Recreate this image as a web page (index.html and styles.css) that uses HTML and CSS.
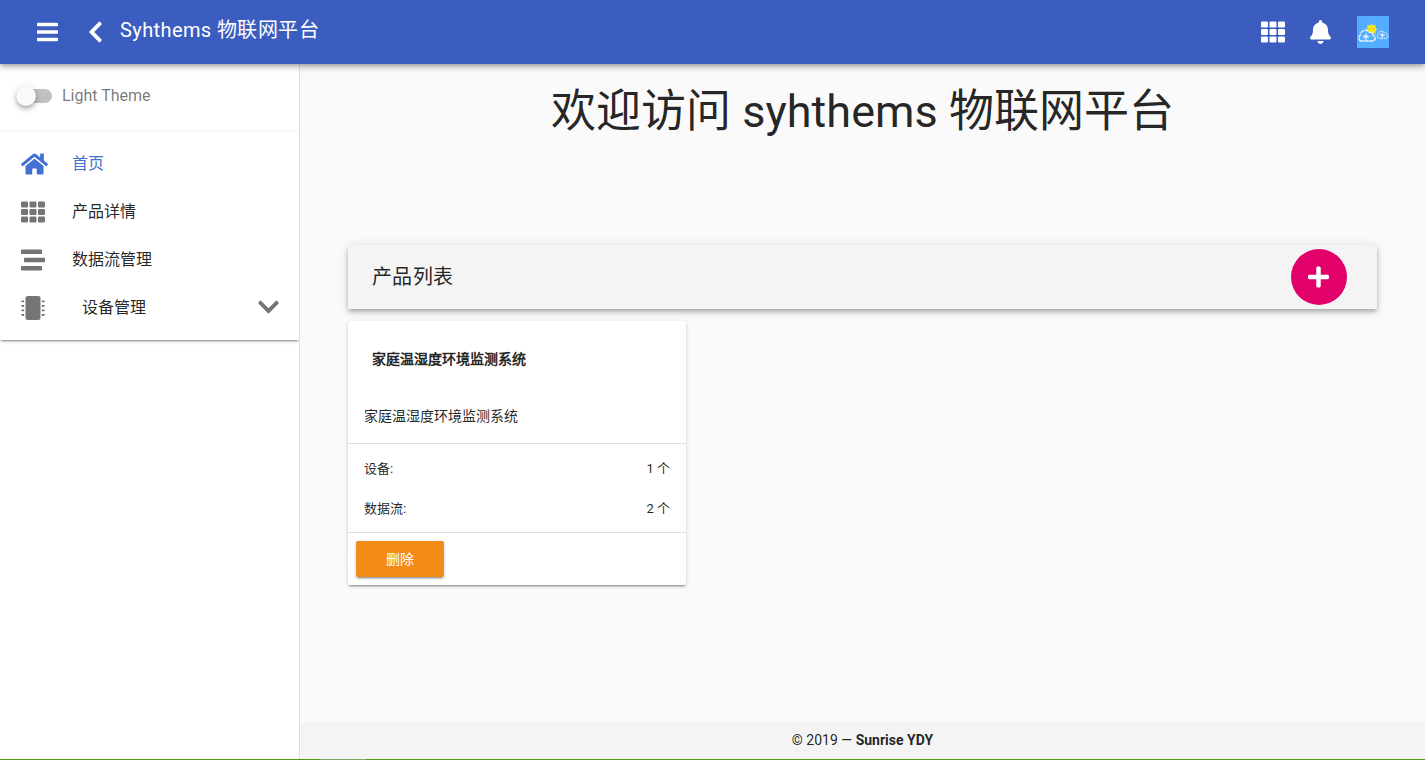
FILE: index.html
```html
<!DOCTYPE html>
<html lang="zh-CN">
<head>
<meta charset="utf-8">
<title>Syhthems 物联网平台</title>
<link rel="stylesheet" href="styles.css">
</head>
<body>
<svg class="defs" width="0" height="0">
  <symbol id="th" viewBox="0 0 512 512">
    <rect y="32" width="149.3" height="128" rx="24"/><rect x="181.3" y="32" width="149.3" height="128" rx="24"/><rect x="362.7" y="32" width="149.3" height="128" rx="24"/>
    <rect y="192" width="149.3" height="128" rx="24"/><rect x="181.3" y="192" width="149.3" height="128" rx="24"/><rect x="362.7" y="192" width="149.3" height="128" rx="24"/>
    <rect y="352" width="149.3" height="128" rx="24"/><rect x="181.3" y="352" width="149.3" height="128" rx="24"/><rect x="362.7" y="352" width="149.3" height="128" rx="24"/>
  </symbol>
  <symbol id="pin" viewBox="0 0 72 48"><path d="M72 0H30a6 6 0 0 0-6 6v6H6a6 6 0 0 0-6 6v12a6 6 0 0 0 6 6h18v6a6 6 0 0 0 6 6h42z"/></symbol>
</svg>
<div class="app">
  <header class="topbar">
    <svg class="icon menu" width="21" height="24" viewBox="0 0 448 512"><rect y="60" width="448" height="72" rx="16"/><rect y="220" width="448" height="72" rx="16"/><rect y="380" width="448" height="72" rx="16"/></svg>
    <svg class="icon back" width="15" height="24" viewBox="0 0 320 512"><path d="M34.52 239.03L228.87 44.69c9.37-9.37 24.57-9.37 33.94 0l22.67 22.67c9.36 9.36 9.37 24.52.04 33.9L131.49 256l154.02 154.75c9.34 9.38 9.32 24.54-.04 33.9l-22.67 22.67c-9.37 9.37-24.57 9.37-33.94 0L34.52 272.97c-9.37-9.37-9.37-24.57 0-33.94z"/></svg>
    <div class="brand">Syhthems 物联网平台</div>
    <svg class="icon apps" width="24" height="24"><use href="#th"/></svg>
    <svg class="icon bell" width="21" height="24" viewBox="0 0 448 512"><path d="M224 512c35.32 0 63.97-28.65 63.97-64H160.03c0 35.35 28.65 64 63.97 64zm215.39-149.71c-19.32-20.76-55.47-51.99-55.47-154.29 0-77.7-54.48-139.9-127.94-155.16V32c0-17.67-14.32-32-31.98-32s-31.98 14.33-31.98 32v20.84C118.56 68.1 64.08 130.3 64.08 208c0 102.3-36.15 133.53-55.47 154.29-6 6.45-8.66 14.16-8.61 21.71.11 16.4 12.98 32 32.1 32h383.8c19.12 0 32-15.6 32.1-32 .05-7.55-2.61-15.27-8.61-21.71z"/></svg>
    <svg class="avatar" width="32" height="32" viewBox="0 0 32 32">
      <rect width="32" height="32" fill="#54adff"/>
      <path d="M14.500 7.500v11.500M9 13.300h11.500M10.300 9l8.400 8.600M18.700 9l-8.400 8.600" stroke="#e8dc3a" stroke-width="1.100"/>
      <circle cx="14.700" cy="13.300" r="4.600" fill="#f5e51b"/>
      <circle cx="12.800" cy="12.700" r=".6" fill="#b99a20"/><circle cx="16.200" cy="12.700" r=".6" fill="#b99a20"/>
      <path d="M4.300 25a3.300 3.300 0 0 1-.9-6c-.1-4.300 6.300-6.600 8.900-2.500 2.400-.8 4 .9 3.600 2.700 3.300.8 2.900 5.800-.7 5.800z" fill="#54adff" stroke="#eef6ff" stroke-width="1.300" stroke-dasharray="4 .6"/>
      <path d="M9 17.300v6.700M5.800 20.700h6.400M7.300 19l3.400 3.400M10.700 19l-3.400 3.400" stroke="#eef6ff" stroke-width="1"/>
      <path d="M22 22.300a2.200 2.200 0 0 1-.7-4.100c.1-3.300 4.700-4 6-1.500 1.700-.3 2.500.8 2.300 2 1.900.8 1.500 3.600-.6 3.600z" fill="none" stroke="#d7ebff" stroke-width="1" stroke-dasharray="3 .5"/>
      <path d="M25.300 16.800v4.800M22.900 19.200h4.800" stroke="#eef6ff" stroke-width="1.200"/>
    </svg>
  </header>
  <div class="body">
    <aside class="sidebar">
      <div class="theme"><span class="switch"><span class="thumb"></span></span><span>Light Theme</span></div>
      <nav class="nav">
        <a class="item active"><span class="ico"><svg class="icon" width="27" height="24" viewBox="0 0 576 512"><path d="M280.37 148.26L96 300.11V464a16 16 0 0 0 16 16l112.06-.29a16 16 0 0 0 15.92-16V368a16 16 0 0 1 16-16h64a16 16 0 0 1 16 16v95.64a16 16 0 0 0 16 16.05L464 480a16 16 0 0 0 16-16V300L295.67 148.26a12.19 12.19 0 0 0-15.3 0zM571.6 251.47L488 182.56V44.05a12 12 0 0 0-12-12h-56a12 12 0 0 0-12 12v72.61L318.47 43a48 48 0 0 0-61 0L4.34 251.47a12 12 0 0 0-1.6 16.9l25.5 31A12 12 0 0 0 45.15 301l235.22-193.74a12.19 12.19 0 0 1 15.3 0L530.9 301a12 12 0 0 0 16.9-1.6l25.5-31a12 12 0 0 0-1.700-16.930z"/></svg></span>首页</a>
        <a class="item"><span class="ico"><svg class="icon" width="24" height="24"><use href="#th"/></svg></span>产品详情</a>
        <a class="item"><span class="ico"><svg class="icon" width="24" height="24" viewBox="0 0 512 512"><rect y="32" width="448" height="96" rx="16"/><rect x="64" y="208" width="448" height="96" rx="16"/><rect y="384" width="448" height="96" rx="16"/></svg></span>数据流管理</a>
        <a class="item group"><span class="ico"><svg class="icon" width="24" height="24" viewBox="0 0 512 512"><rect x="96" width="320" height="512" rx="48"/>
          <use href="#pin" y="88" width="72" height="48"/><use href="#pin" y="184" width="72" height="48"/><use href="#pin" y="280" width="72" height="48"/><use href="#pin" y="376" width="72" height="48"/>
          <g transform="matrix(-1 0 0 1 512 0)"><use href="#pin" y="88" width="72" height="48"/><use href="#pin" y="184" width="72" height="48"/><use href="#pin" y="280" width="72" height="48"/><use href="#pin" y="376" width="72" height="48"/></g></svg></span><span class="label">设备管理</span>
          <svg class="icon" width="21" height="24" viewBox="0 0 448 512"><path d="M207.029 381.476L12.686 187.132c-9.373-9.373-9.373-24.569 0-33.941l22.667-22.667c9.357-9.357 24.522-9.375 33.901-.04L224 284.505l154.745-154.021c9.379-9.335 24.544-9.317 33.901.04l22.667 22.667c9.373 9.373 9.373 24.569 0 33.941L240.971 381.476c-9.373 9.372-24.569 9.372-33.942 0z"/></svg></a>
      </nav>
    </aside>
    <div class="page">
      <main class="content">
        <h1>欢迎访问 syhthems 物联网平台</h1>
        <div class="toolbar"><span>产品列表</span>
          <button class="add"><svg class="icon" width="21" height="24" viewBox="0 0 448 512"><path d="M416 208H272V64c0-17.67-14.33-32-32-32h-32c-17.67 0-32 14.33-32 32v144H32c-17.67 0-32 14.33-32 32v32c0 17.67 14.33 32 32 32h144v144c0 17.67 14.33 32 32 32h32c17.67 0 32-14.33 32-32V304h144c17.67 0 32-14.33 32-32v-32c0-17.67-14.33-32-32-32z"/></svg></button>
        </div>
        <article class="card">
          <h4>家庭温湿度环境监测系统</h4>
          <p>家庭温湿度环境监测系统</p>
          <div class="stats">
            <div class="row"><span>设备:</span><span>1 个</span></div>
            <div class="row"><span>数据流:</span><span>2 个</span></div>
          </div>
          <div class="actions"><button class="delete">删除</button></div>
        </article>
      </main>
      <footer class="footer"><span>© 2019 — <strong>Sunrise YDY</strong></span></footer>
    </div>
  </div>
  <div class="strip"><span></span></div>
</div>
</body>
</html>
```
FILE: styles.css
```css
* { box-sizing: border-box; }
body {
  margin: 0;
  font: 14px/1.5 Roboto, sans-serif;
  color: rgba(0, 0, 0, .87);
  background: #fafafa;
}
button { font: inherit; border: 0; padding: 0; }
.defs { position: absolute; }
.icon { display: block; flex: none; fill: currentColor; }
.app { display: flex; flex-direction: column; height: 760px; overflow: hidden; }

.topbar {
  display: flex;
  align-items: center;
  flex: none;
  height: 64px;
  padding: 0 36px 0 37px;
  background: #3b5dbf;
  color: #fff;
  z-index: 2;
  box-shadow: 0 2px 4px -1px rgba(0,0,0,.2), 0 4px 5px rgba(0,0,0,.14), 0 1px 10px rgba(0,0,0,.12);
}
.back { margin-left: 30px; }
.brand { flex: 1; margin-left: 17px; padding-bottom: 4px; font-size: 20px; letter-spacing: .4px; line-height: 30px; }
.bell { margin-left: 25px; }
.avatar { display: block; margin-left: 26px; }

.body { display: flex; flex: 1; min-height: 0; }
.sidebar { width: 300px; flex: none; background: #fff; border-right: 1px solid #e0e0e0; overflow: hidden; }
.theme { display: flex; align-items: center; height: 68px; padding: 0 16px 4px; font-size: 16px; color: rgba(0,0,0,.54); }
.switch { display: flex; align-items: center; width: 36px; height: 14px; margin-right: 10px; border-radius: 7px; background: #c1c1c1; }
.thumb { width: 20px; height: 20px; border-radius: 50%; background: #fafafa; box-shadow: 0 2px 4px -1px rgba(0,0,0,.2), 0 4px 5px rgba(0,0,0,.14), 0 1px 10px rgba(0,0,0,.12); }
.nav {
  height: 208px;
  padding: 8px 0;
  background: #fff;
  border-radius: 2px;
  box-shadow: 0 3px 1px -2px rgba(0,0,0,.2), 0 2px 2px rgba(0,0,0,.14), 0 1px 5px rgba(0,0,0,.12);
}
.item { display: flex; align-items: center; height: 48px; padding: 0 20px 0 21px; font-size: 16px; line-height: 24px; }
.ico { width: 51px; color: #757575; }
.active, .active .ico { color: #4270d4; }
.group .label { flex: 1; padding-left: 10px; }
.group > .icon { margin-bottom: 2px; color: #757575; }

.page { flex: 1; display: flex; flex-direction: column; }
.content { flex: 1; padding: 14px 48px 0; }
h1 { margin: 0 0 101px; height: 66px; font-size: 45px; line-height: 68px; font-weight: 400; text-align: center; }
.toolbar {
  display: flex;
  align-items: center;
  justify-content: space-between;
  height: 64px;
  padding: 0 30px 0 24px;
  background: #f4f4f4;
  font-size: 20px;
  letter-spacing: .4px;
  box-shadow: 0 2px 4px -1px rgba(0,0,0,.2), 0 4px 5px rgba(0,0,0,.14), 0 1px 10px rgba(0,0,0,.12);
}
.add { display: flex; align-items: center; padding-left: 17px; width: 56px; height: 56px; border-radius: 50%; background: #e2006a; color: #fff; }
.card {
  width: 338px;
  margin-top: 12px;
  background: #fff;
  border-radius: 2px;
  box-shadow: 0 3px 1px -2px rgba(0,0,0,.2), 0 2px 2px rgba(0,0,0,.14), 0 1px 5px rgba(0,0,0,.12);
}
.card h4 { margin: 0; height: 76px; padding-left: 24px; line-height: 76px; font-size: 14px; font-weight: 700; }
.card p { margin: 0; height: 46px; padding-left: 16px; line-height: 38px; }
.stats { border: solid #e0e0e0; border-width: 1px 0; padding: 5px 16px 3px; font-size: 13px; }
.row { display: flex; align-items: center; justify-content: space-between; height: 40px; }
.actions { padding: 8px; height: 52px; }
.delete { display: block; width: 88px; height: 36px; border-radius: 2px; background: #f28b18; color: #fff; box-shadow: 0 3px 1px -2px rgba(0,0,0,.2), 0 2px 2px rgba(0,0,0,.14), 0 1px 5px rgba(0,0,0,.12); }
.footer { display: flex; align-items: center; justify-content: center; height: 37px; background: #f4f4f4; }
.strip { flex: none; height: 1px; padding-left: 320px; background: #4f9a15; z-index: 3; }
.strip span { display: block; width: 46px; height: 1px; background: #80a865; }
```
